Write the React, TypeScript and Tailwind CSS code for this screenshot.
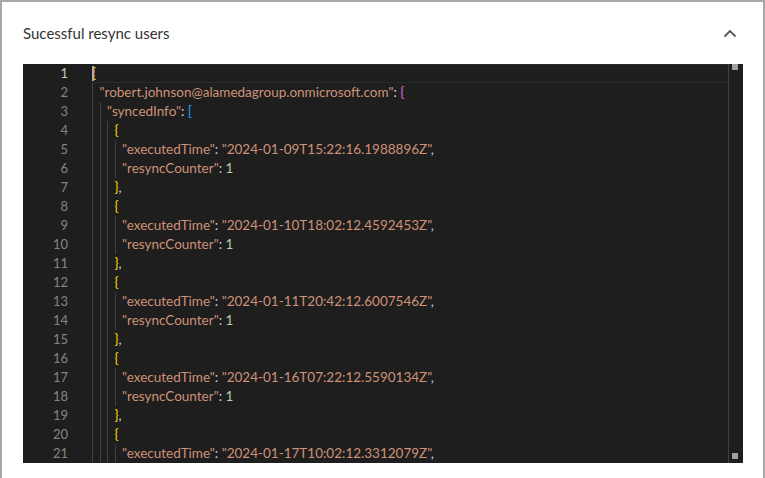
import React from "react";

type Tok = [string, string];
const S = "#ce9178", P = "#d4d4d4", N = "#b5cea8";
const Y = "#ffd700", PU = "#da70d6", B = "#179fff";

const times = ["2024-01-09T15:22:16.1988896Z","2024-01-10T18:02:12.4592453Z","2024-01-11T20:42:12.6007546Z","2024-01-16T07:22:12.5590134Z","2024-01-17T10:02:12.3312079Z"];
const lines: { ind: number; toks: Tok[] }[] = [
  { ind: 0, toks: [["{", Y]] },
  { ind: 1, toks: [['"robert.johnson@alamedagroup.onmicrosoft.com"', S], [": ", P], ["{", PU]] },
  { ind: 2, toks: [['"syncedInfo"', S], [": ", P], ["[", B]] },
];
times.forEach((t, i) => {
  lines.push({ ind: 3, toks: [["{", Y]] });
  lines.push({ ind: 4, toks: [['"executedTime"', S], [": ", P], [`"${t}"`, S], [",", P]] });
  if (i < 4) {
    lines.push({ ind: 4, toks: [['"resyncCounter"', S], [": ", P], ["1", N]] });
    lines.push({ ind: 3, toks: [["}", Y], [",", P]] });
  }
});

export default function App() {
  return (
    <div className="w-[765px] h-[478px] bg-white border-2 border-b-0 border-[#a8a8a8] box-border overflow-hidden" style={{ fontFamily: "Lato, 'Open Sans', sans-serif" }}>
      <div className="flex items-center justify-between h-[62px] pl-[21px] pr-[26px]">
        <span className="text-[15px] text-[#333]">Sucessful resync users</span>
        <svg width="14" height="9" viewBox="0 0 14 9"><path d="M1.5 7.5 L7 2 L12.5 7.5" stroke="#555" strokeWidth="1.8" fill="none" /></svg>
      </div>
      <div className="ml-[21px] w-[720px] h-[399px] bg-[#1e1e1e] flex relative overflow-hidden">
        <div className="w-[69px] pt-0 text-right pr-[24px] text-[13px] text-[#858585]">
          {lines.map((_, i) => (
            <div key={i} className={`h-[19px] leading-[19px] ${i === 0 ? "text-[#c6c6c6]" : ""}`}>{i + 1}</div>
          ))}
        </div>
        <div className="flex-1 text-[13.5px] relative">
          <div className="absolute left-0 right-[14px] top-0 h-[19px] border-y border-[#2a2a2a]" />
          {lines.map((l, i) => (
            <div key={i} className="h-[19px] leading-[19px] flex relative whitespace-pre">
              {Array.from({ length: l.ind }).map((_, k) => (
                <span key={k} className="inline-block w-[7.5px] h-[19px] border-l border-[#404040] shrink-0" />
              ))}
              <span className="relative">
                {i === 0 && <span className="absolute left-0 top-[2px] w-[2px] h-[15px] bg-[#aeafad]" />}
                {l.toks.map(([t, c], j) => (
                  <span key={j} style={{ color: c }}>{t}</span>
                ))}
              </span>
            </div>
          ))}
          <div className="absolute right-[14px] top-0 bottom-0 w-px bg-[#404040]" />
          <div className="absolute right-[5px] top-0 w-[6px] h-[6px] bg-[#a0a0a0]" />
          <div className="absolute right-[5px] bottom-[4px] w-[6px] h-[6px] bg-[#a0a0a0]" />
        </div>
      </div>
    </div>
  );
}
